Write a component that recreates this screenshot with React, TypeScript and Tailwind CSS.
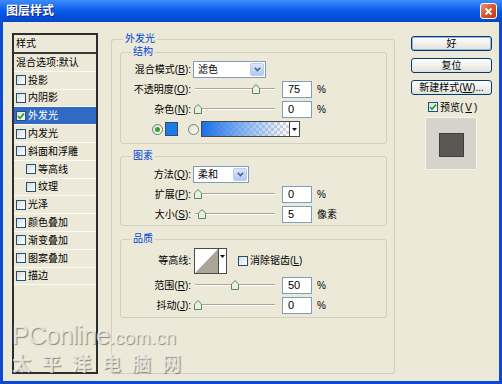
import clsx from "clsx";
import type { ReactNode } from "react";

const FONT = "font-['Liberation_Sans','Noto_Sans_CJK_SC',sans-serif]";

type StyleItem = { label: string; checked?: boolean; selected?: boolean; indent?: boolean };

const styleItems: StyleItem[] = [
  { label: "投影" },
  { label: "内阴影" },
  { label: "外发光", checked: true, selected: true },
  { label: "内发光" },
  { label: "斜面和浮雕" },
  { label: "等高线", indent: true },
  { label: "纹理", indent: true },
  { label: "光泽" },
  { label: "颜色叠加" },
  { label: "渐变叠加" },
  { label: "图案叠加" },
  { label: "描边" }
];

function Check({ checked = false }: { checked?: boolean }) {
  return (
    <span className="flex h-[10px] w-[10px] shrink-0 items-center justify-center border border-[#1C5180] bg-gradient-to-br from-[#DCDBD5] to-white">
      {checked && (
        <svg width="8" height="8" viewBox="0 0 8 8">
          <path d="M1 4 L3 6.2 L7 1.6" fill="none" stroke="#21A121" strokeWidth="1.7" />
        </svg>
      )}
    </span>
  );
}

function Radio({ on = false }: { on?: boolean }) {
  return (
    <span className="flex h-[11px] w-[11px] shrink-0 items-center justify-center rounded-full border border-[#6D8372] bg-gradient-to-br from-[#DCDBD5] to-white">
      {on && <span className="h-[5px] w-[5px] rounded-full bg-[#35A235]" />}
    </span>
  );
}

function Key({ label, k }: { label: string; k?: string }) {
  return (
    <>
      {label}
      {k && (
        <>
          (<u>{k}</u>)
        </>
      )}
    </>
  );
}

function Row({ label, k, tall, children }: { label?: string; k?: string; tall?: boolean; children: ReactNode }) {
  return (
    <div className={clsx("flex items-center", tall ? "h-[29px]" : "h-[20px]")}>
      <span className="w-[70px] shrink-0 text-right whitespace-nowrap">
        {label && (
          <>
            <Key label={label} k={k} />:
          </>
        )}
      </span>
      <div className="ml-[2px] flex items-center">{children}</div>
    </div>
  );
}

function Slider({ left }: { left: number }) {
  return (
    <div className="relative h-[10px] w-[82px] shrink-0">
      <div className="absolute top-[4px] right-0 left-[2px] h-[2px] border-t border-b border-t-[#A9A79C] border-b-white" />
      <div className="absolute top-0" style={{ left }}>
        <svg width="8" height="10" viewBox="0 0 8 10">
          <path d="M0.5 9.5 V4 L4 0.6 L7.5 4 V9.5 Z" fill="#E4F2DE" stroke="#62806A" />
        </svg>
      </div>
    </div>
  );
}

function Field({ value, unit }: { value: string; unit: string }) {
  return (
    <>
      <div className="ml-[7px] flex h-[17px] w-[30px] items-center border border-[#7F9DB9] bg-white pl-[5px] text-[11px]">
        {value}
      </div>
      <span className="ml-[5px] whitespace-nowrap">{unit}</span>
    </>
  );
}

function Select({ value, width }: { value: string; width: string }) {
  return (
    <div className={clsx("flex h-[17px] items-center border border-[#7F9DB9] bg-white pl-[4px]", width)}>
      <span className="flex-1">{value}</span>
      <span className="m-[1px] flex h-[13px] w-[14px] items-center justify-center rounded-[2px] border border-[#B9CBF0] bg-gradient-to-b from-[#DCE6FB] to-[#B3C7F3]">
        <svg width="7" height="5" viewBox="0 0 7 5">
          <path d="M0.8 0.8 L3.5 3.6 L6.2 0.8" fill="none" stroke="#4D6185" strokeWidth="1.6" />
        </svg>
      </span>
    </div>
  );
}

function Group({
  title,
  legendClass = "ml-[10px]",
  className,
  children
}: {
  title: string;
  legendClass?: string;
  className?: string;
  children: ReactNode;
}) {
  return (
    <fieldset className={clsx("rounded-[3px] border border-[#D0D0BF]", className)}>
      <legend className={clsx("px-[2px] leading-[12px] text-[#0046D5]", legendClass)}>{title}</legend>
      {children}
    </fieldset>
  );
}

function XPButton({ children, isDefault, className }: { children: ReactNode; isDefault?: boolean; className?: string }) {
  return (
    <div
      className={clsx(
        "flex h-[15px] w-[81px] items-center justify-center rounded-[3px] border border-[#003C74] bg-gradient-to-b from-white to-[#E2E1D9] whitespace-nowrap",
        isDefault && "shadow-[inset_0_0_0_1px_#9DB4E6]",
        className
      )}
    >
      {children}
    </div>
  );
}

export default function App() {
  return (
    <div className={clsx("relative flex h-[384px] w-[502px] flex-col overflow-hidden bg-[#0B4BD3] text-[10px] text-black", FONT)}>
      <div className="flex h-[22px] shrink-0 items-center justify-between bg-gradient-to-b from-[#3C8DFB] via-[#0759EC] to-[#0346CB] pr-[5px] pl-[6px]">
        <span className="text-[12px] font-bold text-white [text-shadow:1px_1px_0_#0B2A7A]">图层样式</span>
        <span className="flex h-[16px] w-[17px] items-center justify-center rounded-[3px] border border-white bg-gradient-to-br from-[#EE9273] via-[#DA542C] to-[#C03A17]">
          <svg width="9" height="9" viewBox="0 0 9 9">
            <path d="M1.5 1.5 L7.5 7.5 M7.5 1.5 L1.5 7.5" stroke="white" strokeWidth="1.8" />
          </svg>
        </span>
      </div>

      <div className="mx-[3px] mb-[3px] flex flex-1 items-start bg-[#ECE9D8] pt-[11px] pl-[9px]">
        {/* style list */}
        <div className="flex h-[341px] w-[86px] shrink-0 flex-col border-2 border-[#2E2E2E]">
          <div className="flex h-[19px] shrink-0 items-center border-b-2 border-[#3A3A3A] pl-[2px]">样式</div>
          <div className="flex h-[17.8px] shrink-0 items-center border-b border-[#FBFAF4] pl-[2px] whitespace-nowrap">
            混合选项:默认
          </div>
          {styleItems.map((item) => (
            <div
              key={item.label}
              className={clsx(
                "flex h-[17.8px] shrink-0 items-center gap-[2px] border-b border-[#FBFAF4] whitespace-nowrap",
                item.indent ? "pl-[12px]" : "pl-[2px]",
                item.selected && "bg-[#316AC5] text-white"
              )}
            >
              <Check checked={item.checked} />
              {item.label}
            </div>
          ))}
        </div>

        {/* outer glow settings */}
        <Group title="外发光" legendClass="ml-[11px]" className="ml-[13px] h-[341px] w-[284px] shrink-0">
          <Group title="结构" className="mx-[7px] mt-[1px] ml-[8px] pt-[1px] pb-[4px]">
            <Row label="混合模式" k="B">
              <Select value="滤色" width="w-[73px]" />
            </Row>
            <Row label="不透明度" k="O">
              <Slider left={59} />
              <Field value="75" unit="%" />
            </Row>
            <Row label="杂色" k="N">
              <Slider left={1} />
              <Field value="0" unit="%" />
            </Row>
            <div className="flex h-[20px] items-center pl-[31px]">
              <Radio on />
              <span className="ml-[2px] h-[14px] w-[13px] border border-[#3B4A66] bg-[#1A7BEA]" />
              <span className="ml-[10px]">
                <Radio />
              </span>
              <div className="ml-[2px] flex h-[16px] border border-[#4A4A4A]">
                <div className="h-full w-[87px] bg-white bg-[repeating-conic-gradient(#D6D6D6_0_25%,#FFFFFF_0_50%)] bg-[length:6px_6px]">
                  <div className="h-full w-full bg-gradient-to-r from-[#1B6FE6] via-[#5D9CF0]/70 to-[#1B6FE6]/0" />
                </div>
                <div className="flex w-[10px] items-center justify-center border-l border-[#4A4A4A] bg-white">
                  <svg width="5" height="3" viewBox="0 0 5 3">
                    <path d="M0 0 H5 L2.5 3 Z" fill="#111" />
                  </svg>
                </div>
              </div>
            </div>
          </Group>

          <Group title="图素" className="mx-[7px] mt-[6px] ml-[8px] pt-[2px] pb-[1px]">
            <Row label="方法" k="Q">
              <Select value="柔和" width="w-[56px]" />
            </Row>
            <Row label="扩展" k="P">
              <Slider left={1} />
              <Field value="0" unit="%" />
            </Row>
            <Row label="大小" k="S">
              <Slider left={5} />
              <Field value="5" unit="像素" />
            </Row>
          </Group>

          <Group title="品质" className="mx-[7px] mt-[7px] ml-[8px] pt-[1px] pb-[2px]">
            <Row label="等高线" tall>
              <div className="ml-[1px] flex h-[26px] w-[33px] border border-[#4A4A4A] bg-white">
                <svg width="23" height="24" viewBox="0 0 23 24" className="shrink-0">
                  <path d="M0 24 L23 0 V24 Z" fill="#A9A597" />
                </svg>
                <div className="flex flex-1 items-start justify-center border-l border-[#4A4A4A] pt-[6px]">
                  <svg width="5" height="3" viewBox="0 0 5 3">
                    <path d="M0 0 H5 L2.5 3 Z" fill="#111" />
                  </svg>
                </div>
              </div>
              <span className="ml-[11px]">
                <Check />
              </span>
              <span className="ml-[2px] whitespace-nowrap">
                <Key label="消除锯齿" k="L" />
              </span>
            </Row>
            <Row label="范围" k="R">
              <Slider left={38} />
              <Field value="50" unit="%" />
            </Row>
            <Row label="抖动" k="J">
              <Slider left={1} />
              <Field value="0" unit="%" />
            </Row>
          </Group>
        </Group>

        {/* buttons and preview */}
        <div className="mt-[3px] ml-[16px] flex w-[81px] shrink-0 flex-col">
          <XPButton isDefault>好</XPButton>
          <XPButton className="mt-[7px]">复位</XPButton>
          <XPButton className="mt-[7px]">
            <Key label="新建样式" k="W" />
            ...
          </XPButton>
          <div className="mt-[7px] ml-[17px] flex h-[10px] items-center gap-[2px] whitespace-nowrap">
            <Check checked />
            <Key label="预览" k="V" />
          </div>
          <div className="mt-[5px] ml-[14px] flex h-[53px] w-[52px] items-center justify-center border border-[#F4F3EE] bg-[#D5D3CC] pt-[2px]">
            <div className="h-[24px] w-[25px] border border-[#3F3E3C] bg-[#5A5855]" />
          </div>
        </div>
      </div>

      {/* watermark */}
      <div className="pointer-events-none absolute top-[322px] left-[12px] flex flex-col text-[#F6F4EC]/80 [text-shadow:1px_1px_1px_rgba(60,60,60,0.55)]">
        <div className="flex items-baseline font-['Liberation_Sans',sans-serif] leading-[26px]">
          <span className="text-[25px] tracking-[-0.5px]">PConline</span>
          <span className="text-[19px]">.com.cn</span>
        </div>
        <div className="mt-[1px] font-['Noto_Sans_CJK_SC',sans-serif] text-[19px] leading-[22px] font-bold tracking-[11px]">
          太平洋电脑网
        </div>
      </div>
    </div>
  );
}
